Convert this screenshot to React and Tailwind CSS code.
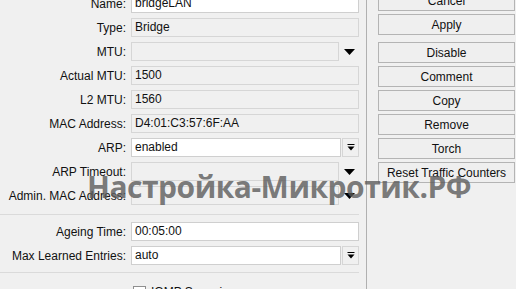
import React from 'react'

const font = { fontFamily: '"Liberation Sans", Arial, sans-serif' }

const DownArrow = () => (
  <svg width="11" height="6" viewBox="0 0 11 6" className="block">
    <path d="M0 0h11L5.5 6z" fill="#000" />
  </svg>
)

const ComboArrow = () => (
  <svg width="8" height="7" viewBox="0 0 8 7" className="block">
    <rect x="0.5" y="0" width="7" height="1" fill="#000" />
    <path d="M0.5 2.5h7L4 6.5z" fill="#000" />
  </svg>
)

const Field = ({ value, white, kind }) => {
  const box = white
    ? 'bg-white border-[#cfcfcf]'
    : 'bg-[#f0f0f0] border-[#d6d6d6]'
  if (kind === 'drop') {
    return (
      <div className="flex items-center">
        <div className={`h-[19px] w-[208px] border ${box} px-[3px] leading-[17px]`}>{value}</div>
        <div className="flex w-[20px] justify-center">
          <DownArrow />
        </div>
      </div>
    )
  }
  if (kind === 'combo') {
    return (
      <div className="flex items-center">
        <div className={`h-[19px] w-[210px] border ${box} px-[3px] leading-[17px]`}>{value}</div>
        <div className="ml-[1px] flex h-[19px] w-[17px] items-center justify-center border border-[#d6d6d6] bg-[#f0f0f0]">
          <ComboArrow />
        </div>
      </div>
    )
  }
  return (
    <div className={`h-[19px] w-[228px] border ${box} px-[3px] leading-[17px]`}>{value}</div>
  )
}

const Row = ({ label, ...rest }) => (
  <div className="flex h-[19px] items-center">
    <div className="w-[126px] text-right whitespace-nowrap">{label}</div>
    <div className="ml-[5px]">
      <Field {...rest} />
    </div>
  </div>
)

const Btn = ({ children }) => (
  <div className="flex h-[21px] items-center justify-center border border-[#b4b4b4] bg-[#efefef] whitespace-nowrap">
    {children}
  </div>
)

export default function App() {
  return (
    <div
      className="relative h-[289px] w-[516px] overflow-hidden bg-[#f0f0f0] text-[12px] text-[#111]"
      style={font}
    >
      <div className="-mt-[10px] flex">
        {/* form */}
        <div className="w-[367px] shrink-0 border-r border-[#b0b0b0] pt-[4px] pr-[7px]">
          <div className="flex flex-col gap-[5px]">
            <Row label="Name:" value="bridgeLAN" white />
            <Row label="Type:" value="Bridge" />
            <Row label="MTU:" value="" kind="drop" />
            <Row label="Actual MTU:" value="1500" />
            <Row label="L2 MTU:" value="1560" />
            <Row label="MAC Address:" value="D4:01:C3:57:6F:AA" />
            <Row label="ARP:" value="enabled" white kind="combo" />
            <Row label="ARP Timeout:" value="" kind="drop" />
            <Row label="Admin. MAC Address:" value="" kind="drop" />
          </div>
          <div className="mt-[9px] h-px bg-[#dadada]" />
          <div className="mt-[7px] flex flex-col gap-[5px]">
            <Row label="Ageing Time:" value="00:05:00" white />
            <Row label="Max Learned Entries:" value="auto" white kind="combo" />
          </div>
          <div className="mt-[7px] h-px bg-[#dadada]" />
          <div className="mt-[10px] flex items-center pl-[133px]">
            <div className="h-[13px] w-[13px] border border-[#8f8f8f] bg-white" />
            <span className="ml-[5px]">IGMP Snooping</span>
          </div>
        </div>

        {/* buttons */}
        <div className="ml-[11px] flex w-[137px] flex-col">
          <div className="flex flex-col gap-[3px]">
            <Btn>Cancel</Btn>
            <Btn>Apply</Btn>
          </div>
          <div className="mt-[7px] flex flex-col gap-[3px]">
            <Btn>Disable</Btn>
            <Btn>Comment</Btn>
            <Btn>Copy</Btn>
            <Btn>Remove</Btn>
            <Btn>Torch</Btn>
            <Btn>Reset Traffic Counters</Btn>
          </div>
        </div>
      </div>

      {/* watermark */}
      <div
        className="pointer-events-none absolute left-[87px] top-[172px] text-[30px] font-bold leading-none tracking-[-0.5px] whitespace-nowrap text-[#5a5a5a]/80"
        style={{ fontFamily: '"Open Sans", "Noto Sans", sans-serif' }}
      >
        Настройка-Микротик.РФ
      </div>
    </div>
  )
}
